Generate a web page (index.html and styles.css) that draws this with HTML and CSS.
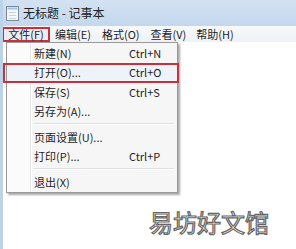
FILE: index.html
```html
<!DOCTYPE html>
<html lang="zh-CN">
<head>
  <meta charset="UTF-8">
  <meta name="viewport" content="width=device-width, initial-scale=1.0">
  <title>无标题 - 记事本</title>
  <link rel="stylesheet" href="styles.css">
</head>
<body>
  <div class="window">
    <div class="titlebar">
      <svg class="app-icon" width="13" height="15" viewBox="0 0 13 15">
        <rect x="0.5" y="0.5" width="12" height="14" fill="#f4f8fc" stroke="#7a8a9c"/>
        <rect x="1.5" y="1.5" width="10" height="2" fill="#9fc3e6"/>
        <line x1="3" y1="6.5" x2="10" y2="6.5" stroke="#c9d3de"/>
        <line x1="3" y1="9.5" x2="10" y2="9.5" stroke="#c9d3de"/>
        <line x1="3" y1="12.5" x2="10" y2="12.5" stroke="#c9d3de"/>
      </svg>
      <span class="title">无标题 - 记事本</span>
    </div>

    <div class="menubar">
      <span class="menu-item active">文件(F)</span>
      <span class="menu-item">编辑(E)</span>
      <span class="menu-item">格式(O)</span>
      <span class="menu-item">查看(V)</span>
      <span class="menu-item">帮助(H)</span>
    </div>

    <div class="editor">
      <div class="watermark">易坊好文馆</div>
    </div>

    <!-- 文件菜单下拉 -->
    <div class="dropdown">
      <div class="row"><span>新建(N)</span><span class="key">Ctrl+N</span></div>
      <div class="row marked"><span>打开(O)...</span><span class="key">Ctrl+O</span></div>
      <div class="row"><span>保存(S)</span><span class="key">Ctrl+S</span></div>
      <div class="row"><span>另存为(A)...</span></div>
      <div class="sep"></div>
      <div class="row"><span>页面设置(U)...</span></div>
      <div class="row"><span>打印(P)...</span><span class="key">Ctrl+P</span></div>
      <div class="sep"></div>
      <div class="row"><span>退出(X)</span></div>
    </div>
  </div>
</body>
</html>
```

FILE: styles.css
```css
body { margin: 0; background: #fff; font-family: "Noto Sans CJK SC", "Microsoft YaHei", sans-serif; color: #1e1e1e; }
.window { position: relative; width: 293px; height: 249px; border-left: 3px solid #bcd3ec; overflow: hidden; }

.titlebar { height: 26px; display: flex; align-items: center; gap: 4px; padding-left: 3px; background: linear-gradient(#d3e2f2, #c3d7ed); }
.app-icon { display: block; margin-top: 1px; }
.title { font-size: 12px; color: #222; line-height: 1; }

.menubar { height: 16px; display: flex; align-items: center; background: linear-gradient(#f7f9fb, #eef2f6); font-size: 11px; }
.menu-item { line-height: 12px; }
.menu-item.active { margin-left: -1px; width: 44px; height: 11px; border: 2px solid #c9303a; display: flex; align-items: center; justify-content: center; background: #e9eef5; }
.menu-item:nth-child(2) { margin-left: 5px; }
.menu-item:nth-child(3) { margin-left: 11px; }
.menu-item:nth-child(4) { margin-left: 11px; }
.menu-item:nth-child(5) { margin-left: 10px; }

.editor { height: 207px; position: relative; background: #fff; }
.watermark { position: absolute; left: 146px; top: 168px; font-size: 24px; color: #fff; -webkit-text-stroke: 1.2px #666; line-height: 1; }

.dropdown { position: absolute; left: 3px; top: 42px; width: 170px; border: 1px solid #9a9a9a; background: linear-gradient(90deg, #fbfbfb 23px, #e2e3e3 23px, #e2e3e3 24px, #fff 24px, #fff 25px, #f6f6f6 25px); box-shadow: 2px 2px 2px rgba(0, 0, 0, 0.35); font-size: 11px; }
.row { position: relative; height: 19.5px; display: flex; align-items: center; padding-left: 27px; }
.row span:first-child { width: 95px; }
.row.marked { background: #eef3f9; }
.row.marked::after { content: ""; position: absolute; left: -4px; right: -2px; top: 0; bottom: -1px; border: 2px solid #c9303a; }
.sep { height: 6px; margin-left: 26px; margin-right: 3px; background: linear-gradient(transparent 2px, #e0e0e0 2px, #e0e0e0 3px, #fff 3px, #fff 4px, transparent 4px); }
```
